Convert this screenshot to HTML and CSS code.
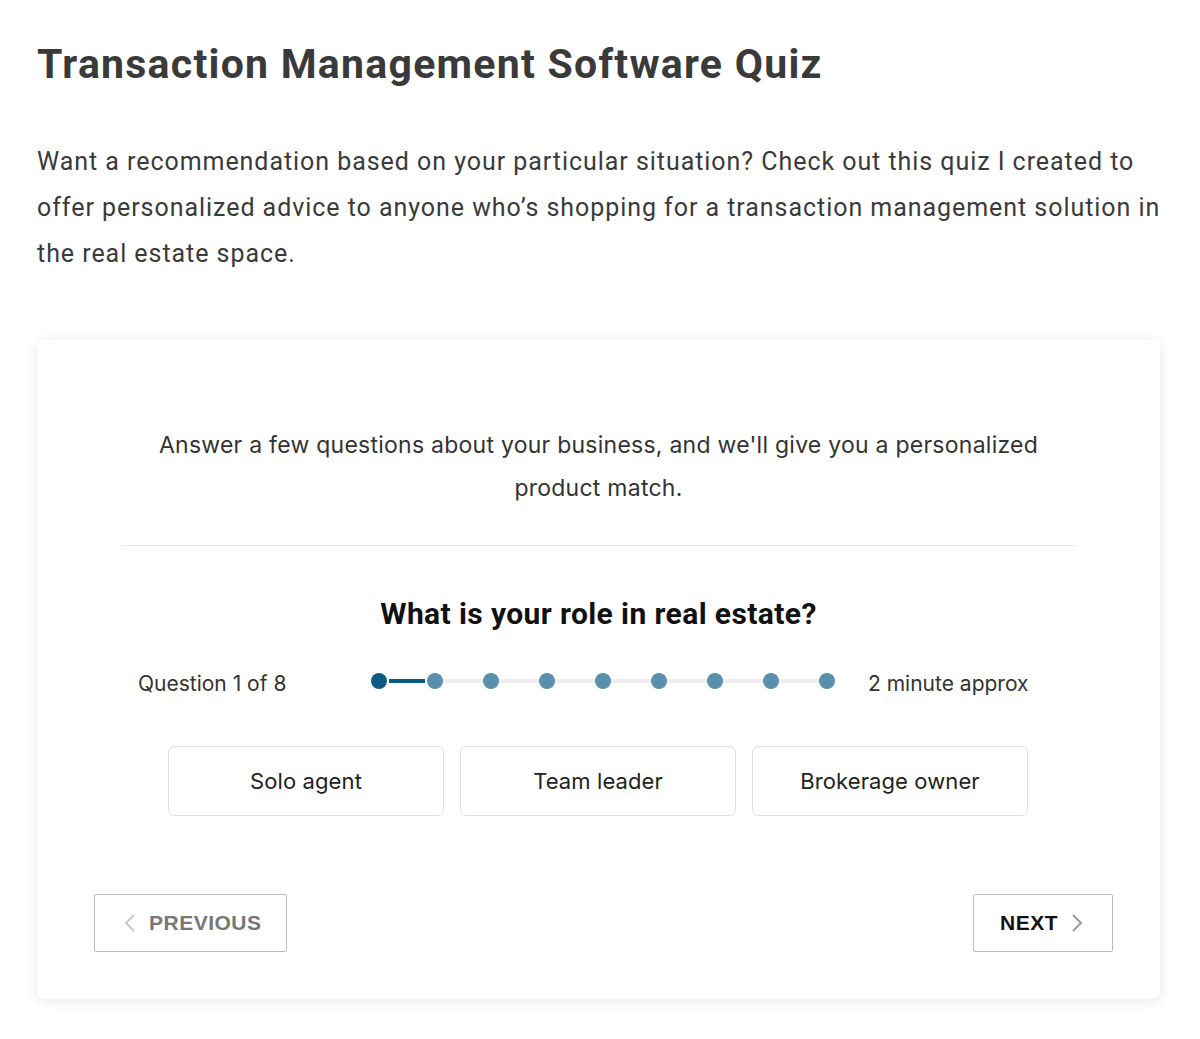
FILE: index.html
```html
<!DOCTYPE html>
<html>
<head>
<meta charset="utf-8">
<link rel="stylesheet" href="styles.css">
</head>
<body>
<main class="page">
  <h1 class="title">Transaction Management Software Quiz</h1>
  <p class="intro">Want a recommendation based on your particular situation? Check out this quiz I created to offer personalized advice to anyone who’s shopping for a transaction management solution in the real estate space.</p>
  <section class="card">
    <p class="lead">Answer a few questions about your business, and we'll give you a personalized product match.</p>
    <hr class="divider">
    <h2 class="question">What is your role in real estate?</h2>
    <div class="progress">
      <span class="count">Question 1 of 8</span>
      <div class="track">
        <span class="dot dot-active"></span>
        <span class="seg seg-active"></span>
        <span class="dot"></span>
        <span class="seg"></span>
        <span class="dot"></span>
        <span class="seg"></span>
        <span class="dot"></span>
        <span class="seg"></span>
        <span class="dot"></span>
        <span class="seg"></span>
        <span class="dot"></span>
        <span class="seg"></span>
        <span class="dot"></span>
        <span class="seg"></span>
        <span class="dot"></span>
        <span class="seg"></span>
        <span class="dot"></span>
      </div>
      <span class="time">2 minute approx</span>
    </div>
    <div class="options">
      <button class="option">Solo agent</button>
      <button class="option">Team leader</button>
      <button class="option">Brokerage owner</button>
    </div>
    <div class="nav">
      <button class="navbtn prev">
        <svg class="chev" width="12" height="20" viewBox="0 0 12 20"><path d="M10 2 L2 10 L10 18" fill="none" stroke="#c8c8c8" stroke-width="2"/></svg>
        PREVIOUS
      </button>
      <button class="navbtn next">
        NEXT
        <svg class="chev" width="12" height="20" viewBox="0 0 12 20"><path d="M2 2 L10 10 L2 18" fill="none" stroke="#9a9a9a" stroke-width="2"/></svg>
      </button>
    </div>
  </section>
</main>
</body>
</html>
```
FILE: styles.css
```css
* { box-sizing: border-box; }
html, body { margin: 0; padding: 0; background: #fff; }
body { font-family: Roboto, "Liberation Sans", sans-serif; color: #3a3a3a; }
.page { padding: 40px 36px 40px 37px; }
.title {
  margin: 0;
  font-size: 41px;
  font-weight: 700;
  line-height: 48px;
  letter-spacing: 1.25px;
  color: #3a3a3a;
}
.intro {
  margin: 51px 0 0;
  font-size: 25px;
  line-height: 46px;
  letter-spacing: 0.95px;
  color: #3a3a3a;
}
.card {
  margin-top: 62px;
  width: 1123px;
  background: #fff;
  border-radius: 7px;
  box-shadow: 0 2px 14px rgba(0,0,0,0.09), 0 0 3px rgba(0,0,0,0.04);
  padding: 85px 57px 47px;
  font-family: Inter, "Noto Sans", sans-serif;
}
.lead {
  margin: 0 28px;
  text-align: center;
  font-size: 23px;
  line-height: 43px;
  letter-spacing: 0.25px;
  color: #333;
}
.divider {
  margin: 35px 28px 0;
  border: 0;
  border-top: 1px solid #e6e6e6;
}
.question {
  margin: 48px 0 0;
  text-align: center;
  font-family: Roboto, sans-serif;
  font-size: 30px;
  font-weight: 700;
  line-height: 40px;
  letter-spacing: 0.4px;
  color: #111;
}
.progress {
  margin-top: 31px;
  display: flex;
  align-items: center;
  padding-left: 44px;
  height: 32px;
}
.count { font-size: 21px; color: #333; width: 233px; padding-top: 4px; }
.track { display: flex; align-items: center; }
.dot {
  width: 16px; height: 16px; border-radius: 50%;
  background: #5a8fad;
  flex: none;
}
.dot-active { background: #0f5a80; }
.seg { width: 40px; height: 4px; background: #ededed; flex: none; }
.seg-active { background: #0f5a80; width: 36px; margin: 0 2px; }
.time { font-size: 21px; color: #333; margin-left: 33px; padding-top: 4px; }
.options {
  margin-top: 49px;
  display: flex;
  gap: 16px;
  padding-left: 74px;
}
.option {
  width: 276px;
  height: 70px;
  background: #fff;
  border: 1px solid #dedede;
  border-radius: 6px;
  font-family: Inter, "Noto Sans", sans-serif;
  font-size: 22px;
  letter-spacing: 0.1px;
  color: #222;
}
.nav {
  margin-top: 78px;
  margin-right: -10px;
  display: flex;
  justify-content: space-between;
}
.navbtn {
  height: 58px;
  background: #fff;
  border: 1px solid #bdbdbd;
  border-radius: 2px;
  font-family: "Liberation Sans", Arial, sans-serif;
  font-weight: 700;
  font-size: 21px;
  letter-spacing: 0.5px;
  display: flex;
  align-items: center;
  gap: 13px;
}
.prev { width: 193px; color: #777; padding-left: 29px; }
.next { width: 140px; color: #111; padding-left: 26px; }
.chev { display: block; }
```
